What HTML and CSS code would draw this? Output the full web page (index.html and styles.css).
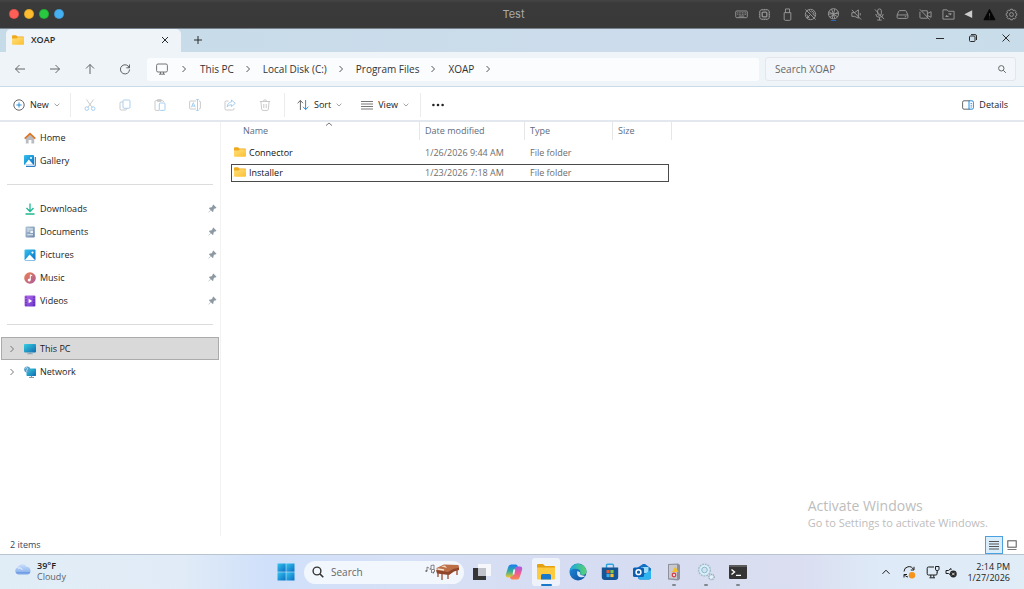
FILE: index.html
```html
<!DOCTYPE html>
<html lang="en">
<head>
<meta charset="utf-8">
<title>Test</title>
<link rel="stylesheet" href="styles.css">
</head>
<body>
<svg class="defs" aria-hidden="true">
  <defs>
    <linearGradient id="gFolder" x1="0" y1="0" x2="1" y2="1"><stop offset="0" stop-color="#ffdf7e"/><stop offset="1" stop-color="#fbc02f"/></linearGradient>
    <linearGradient id="gBlue" x1="0" y1="0" x2="1" y2="1"><stop offset="0" stop-color="#34c3ee"/><stop offset="1" stop-color="#0b6fc4"/></linearGradient>
    <linearGradient id="gTeal" x1="0" y1="0" x2="1" y2="1"><stop offset="0" stop-color="#35d0e0"/><stop offset="1" stop-color="#1169b0"/></linearGradient>
    <linearGradient id="gMusic" x1="0" y1="0" x2="1" y2="1"><stop offset="0" stop-color="#f0824e"/><stop offset="1" stop-color="#a8579c"/></linearGradient>
    <linearGradient id="gVideo" x1="0" y1="0" x2="1" y2="1"><stop offset="0" stop-color="#b56be8"/><stop offset="1" stop-color="#6a35cf"/></linearGradient>
    <linearGradient id="gDoc" x1="0" y1="0" x2="1" y2="1"><stop offset="0" stop-color="#b4c8dc"/><stop offset="1" stop-color="#6883a6"/></linearGradient>
    <linearGradient id="gCloud" x1="0" y1="0" x2="0" y2="1"><stop offset="0" stop-color="#c9defb"/><stop offset="1" stop-color="#7ea9ea"/></linearGradient>
    <linearGradient id="gEdge" x1="0" y1="0" x2="1" y2="0"><stop offset="0" stop-color="#1ba6e4"/><stop offset="1" stop-color="#58d36b"/></linearGradient>
    <linearGradient id="gEdge2" x1="0" y1="0" x2="1" y2="1"><stop offset="0" stop-color="#1c8fdc"/><stop offset="1" stop-color="#114a9b"/></linearGradient>
    <linearGradient id="gCopA" x1="0" y1="0" x2="0" y2="1"><stop offset="0" stop-color="#1a7cf0"/><stop offset=".5" stop-color="#2fae9c"/><stop offset="1" stop-color="#f3c62c"/></linearGradient>
    <linearGradient id="gCopB" x1="0" y1="0" x2="0" y2="1"><stop offset="0" stop-color="#a35be8"/><stop offset=".5" stop-color="#ee5a96"/><stop offset="1" stop-color="#f8894a"/></linearGradient>
    <symbol id="folder" viewBox="0 0 12 10"><path d="M0 1.2Q0 .2 1 .2H4L5.4 1.6H11Q12 1.6 12 2.6V5H0Z" fill="#efa91c"/><path d="M0 3.4H4.6L6 2.3H11.4Q12 2.3 12 3V9Q12 9.8 11.2 9.8H.8Q0 9.8 0 9Z" fill="url(#gFolder)"/></symbol>
    <symbol id="chev" viewBox="0 0 6 8"><path d="M1.5 1 4.5 4 1.5 7" fill="none" stroke="currentColor"/></symbol>
    <symbol id="down" viewBox="0 0 6 4"><path d="M.6.7 3 3 5.4.7" fill="none" stroke="currentColor" stroke-width=".8"/></symbol>
    <symbol id="pin" viewBox="0 0 9 9"><path d="M5.3.5 8.5 3.7 7.6 4.4 6.9 4.3 5.5 5.8 5.4 7.4 4.6 8 2.9 6.3.7 8.5.4 8.2 2.6 6 1 4.4 1.6 3.6 3.2 3.5 4.7 2.1 4.6 1.3Z" fill="#8c99a3"/></symbol>
    <symbol id="picture" viewBox="0 0 12 12"><rect x=".5" y=".5" width="11" height="11" rx="1" fill="url(#gBlue)"/><path d="M1 11 5.6 5.4 11 11Z" fill="#fff"/><circle cx="8.5" cy="3.6" r="1.1" fill="#fff"/></symbol>
  </defs>
</svg>

<div class="screen">
  <header class="vm-bar">
    <div class="lights"><i class="red"></i><i class="yellow"></i><i class="green"></i><i class="blue"></i></div>
    <h1 class="vm-title">Test</h1>
    <div class="vm-tools">
      <svg viewBox="0 0 14 14"><rect x=".8" y="3.2" width="12.4" height="7.2" rx="1"/><path d="M2.4 5.2H12M2.4 6.8H12" stroke-dasharray="1 .7"/><path d="M4 8.7H10"/></svg>
      <svg viewBox="0 0 14 14"><rect x="2" y="2" width="10" height="10" rx="2"/><rect x="4.5" y="4.5" width="5" height="5" rx="1" stroke-width="1.4"/><path d="M4.5 1V2M7 1V2M9.5 1V2M4.5 12V13M7 12V13M9.5 12V13M1 4.5H2M1 7H2M1 9.5H2M12 4.5H13M12 7H13M12 9.5H13"/></svg>
      <svg viewBox="0 0 14 14"><path d="M4.8 5V1H9.2V5M3.4 5H10.6V12Q10.6 13.3 9.3 13.3H4.7Q3.4 13.3 3.4 12Z"/></svg>
      <svg viewBox="0 0 14 14"><circle cx="7" cy="7" r="5.6"/><path d="M1.5 1.5 12.5 12.5M7 7 3 11M8 3Q11 4 11 7M3 7Q3.5 10 6 11M5 2 8 5M9 6 12 9"/></svg>
      <svg viewBox="0 0 14 14"><circle cx="7" cy="6.2" r="5.5"/><path d="M2 4 11.5 9.5M12 4 3 10M5 1.2 8.5 11.5M8.5 1 5.5 11.5M1.5 6.5 12.5 6"/><path d="M4.2 13.5H9.8" stroke="#2a6bc4"/></svg>
      <svg viewBox="0 0 14 14"><path d="M2 5H5L9 2V11L5 9H2ZM2 2 12 12.5M11 5.5V8"/></svg>
      <svg viewBox="0 0 14 14"><rect x="5" y="1" width="4" height="7" rx="2"/><path d="M3 6.5Q3 10 7 10T11 6.5M7 10V13M4.5 13H9.5M2 1.5 12 12"/></svg>
      <svg viewBox="0 0 14 14"><path d="M1.2 7.5 3 3.5Q3.3 2.8 4 2.8H10Q10.7 2.8 11 3.5L12.8 7.5V10Q12.8 11.2 11.6 11.2H2.4Q1.2 11.2 1.2 10ZM1.2 7.5H12.8M9.5 9.4H11"/></svg>
      <svg viewBox="0 0 14 14"><path d="M3 3H9V11H2Q1 11 1 10V4M9 6 13 4V10L9 8M1 1.5 11.5 12.5"/></svg>
      <svg viewBox="0 0 14 14"><path d="M1 12V2H5.5L6.8 3.5H13V12Z"/><path d="M4 9H7M7 6.4H10" stroke-width="1.3"/><path d="M4 9 5.3 7.8M10 6.4 8.7 7.6"/></svg>
      <svg class="t-play" viewBox="0 0 14 14"><path d="M2.5 6.6 11 2.5V10.8Z" fill="#ccc" stroke="none"/></svg>
      <svg class="t-warn" viewBox="0 0 14 14"><path d="M7 1.5 13 12.7H1Z" fill="#050505" stroke="#050505"/><path d="M7 5.5V9M7 10.3V11.3" stroke="#444"/></svg>
      <svg class="t-gear" viewBox="0 0 14 14"><path d="M5.9 1.3H8.1L8.7 2.8 10.3 2.2 11.8 3.7 11.2 5.3 12.7 5.9V8.1L11.2 8.7 11.8 10.3 10.3 11.8 8.7 11.2 8.1 12.7H5.9L5.3 11.2 3.7 11.8 2.2 10.3 2.8 8.7 1.3 8.1V5.9L2.8 5.3 2.2 3.7 3.7 2.2 5.3 2.8Z"/><circle cx="7" cy="7" r="2.1"/></svg>
    </div>
  </header>

  <div class="tab-strip">
    <div class="tab"><svg class="i-folder"><use href="#folder"/></svg><strong>XOAP</strong>
      <button class="plain" aria-label="Close tab"><svg class="i8" viewBox="0 0 8 8"><path d="M1 1 7 7M7 1 1 7"/></svg></button></div>
    <button class="plain new-tab" aria-label="New tab"><svg class="i8" viewBox="0 0 8 8"><path d="M4 0V8M0 4H8"/></svg></button>
    <div class="win-buttons">
      <button class="plain" aria-label="Minimize"><svg class="i8" viewBox="0 0 8 8"><path d="M0 4.5H8"/></svg></button>
      <button class="plain" aria-label="Restore"><svg class="i8" viewBox="0 0 8 8"><rect x=".5" y="2" width="5.5" height="5.5" rx="1"/><path d="M2 .6H6Q7.5.6 7.5 2V6"/></svg></button>
      <button class="plain" aria-label="Close"><svg class="i8" viewBox="0 0 8 8"><path d="M.5.5 7.5 7.5M7.5.5.5 7.5"/></svg></button>
    </div>
  </div>

  <nav class="nav-row">
    <div class="nav-buttons">
      <button class="plain" aria-label="Back"><svg class="i12" viewBox="0 0 12 12"><path d="M1.5 6H11M5.5 2 1.5 6 5.5 10"/></svg></button>
      <button class="plain" aria-label="Forward"><svg class="i12" viewBox="0 0 12 12"><path d="M1 6H10.5M6.5 2 10.5 6 6.5 10"/></svg></button>
      <button class="plain" aria-label="Up"><svg class="i12" viewBox="0 0 12 12"><path d="M6 1.5V11M2 5.5 6 1.5 10 5.5"/></svg></button>
      <button class="plain" aria-label="Refresh"><svg class="i12" viewBox="0 0 12 12"><path d="M10.4 5A4.6 4.6 0 1 0 10.6 6.5M10.5 1.5V4.8H7.3"/></svg></button>
    </div>
    <div class="address">
      <svg class="i12" viewBox="0 0 12 12"><rect x=".6" y="1" width="10.8" height="8" rx="1.4"/><path d="M4.5 9V11M7.5 9V11M3 11.2H9"/></svg>
      <svg class="crumb-chev"><use href="#chev"/></svg><a href="#">This PC</a>
      <svg class="crumb-chev"><use href="#chev"/></svg><a href="#">Local Disk (C:)</a>
      <svg class="crumb-chev"><use href="#chev"/></svg><a href="#">Program Files</a>
      <svg class="crumb-chev"><use href="#chev"/></svg><a href="#">XOAP</a>
      <svg class="crumb-chev"><use href="#chev"/></svg>
    </div>
    <label class="search"><input type="search" placeholder="Search XOAP" aria-label="Search XOAP"><svg class="i8" viewBox="0 0 8 8"><circle cx="3.3" cy="3.3" r="2.7"/><path d="M5.3 5.3 7.8 7.8"/></svg></label>
  </nav>

  <div class="commands">
    <button class="plain cmd new"><svg class="i12" viewBox="0 0 12 12"><circle cx="6" cy="6" r="5.2"/><path d="M6 3.4V8.6M3.4 6H8.6" stroke="#1583d6"/></svg>New<svg class="i-down"><use href="#down"/></svg></button>
    <div class="file-ops">
      <button class="plain" disabled aria-label="Cut"><svg class="i12" viewBox="0 0 12 12"><path d="M2.5.5 8 8.3M9.5.5 4 8.3"/><g class="accent"><circle cx="2.8" cy="9.6" r="1.8"/><circle cx="9.2" cy="9.6" r="1.8"/></g></svg></button>
      <button class="plain" disabled aria-label="Copy"><svg class="i12" viewBox="0 0 12 12"><path d="M4 3H2Q1 3 1 4V10Q1 11 2 11H6.5Q7.5 11 7.5 9.5"/><rect class="accent" x="4" y="1" width="7" height="8.3" rx="1.2"/></svg></button>
      <button class="plain" disabled aria-label="Paste"><svg class="i12" viewBox="0 0 12 12"><path d="M5 11.4H2Q1 11.4 1 10.4V2.6Q1 1.6 2 1.6H8.5Q9.5 1.6 9.5 3M3.5.6H7V2.4H3.5Z"/><rect class="accent" x="5.3" y="4" width="5.7" height="7.4" rx="1"/></svg></button>
      <button class="plain" disabled aria-label="Rename"><svg class="i12" viewBox="0 0 12 12"><path d="M7 2H1.6Q.6 2 .6 3V9Q.6 10 1.6 10H7M10 2Q11.4 2 11.4 3V9Q11.4 10 10 10"/><path class="accent" d="M8.5.6V11.4M7.2.6H9.8M7.2 11.4H9.8M2.4 8.3 4.3 3.7 6.2 8.3M3 7H5.6"/></svg></button>
      <button class="plain" disabled aria-label="Share"><svg class="i12" viewBox="0 0 12 12"><path d="M4.5 2H2.2Q1 2 1 3.2V9.8Q1 11 2.2 11H8.8Q10 11 10 9.8V9"/><path class="accent" d="M7.5 1 11.3 4.3 7.5 7.6V5.7Q4.5 5.6 3.2 8 3.4 3.4 7.5 2.9Z"/></svg></button>
      <button class="plain" disabled aria-label="Delete"><svg class="i12" viewBox="0 0 12 12"><path d="M.8 2.5H11.2M4.4 2.5Q4.4.8 6 .8T7.6 2.5M1.9 2.5 2.7 10.4Q2.8 11.4 3.8 11.4H8.2Q9.2 11.4 9.3 10.4L10.1 2.5M4.8 5V9M7.2 5V9"/></svg></button>
    </div>
    <div class="arrange">
      <button class="plain cmd"><svg class="i12" viewBox="0 0 12 12"><path d="M3.4 11V1.5M.6 4.2 3.4 1.5 6 4.2"/><path d="M8.6 1V10.5M6 7.8 8.6 10.5 11.4 7.8" stroke="#1583d6"/></svg>Sort<svg class="i-down"><use href="#down"/></svg></button>
      <button class="plain cmd"><svg class="i12" viewBox="0 0 12 12"><path d="M0 2.5H12M0 5H12M0 7.5H12M0 10H12" stroke-width=".8"/></svg>View<svg class="i-down"><use href="#down"/></svg></button>
    </div>
    <button class="plain more" aria-label="More"><svg class="i12" viewBox="0 0 12 12"><g fill="#222" stroke="none"><circle cx="1.4" cy="6" r="1.3"/><circle cx="6" cy="6" r="1.3"/><circle cx="10.6" cy="6" r="1.3"/></g></svg></button>
    <button class="plain cmd details"><svg class="i12" viewBox="0 0 12 12"><path d="M7.5 1.8H2Q.6 1.8.6 3.2V8.8Q.6 10.2 2 10.2H7.5"/><path d="M7 1.8H10Q11.4 1.8 11.4 3.2V8.8Q11.4 10.2 10 10.2H7ZM8.6 4.5H9.8M8.6 6.3H9.8M8.6 8H9.8" stroke="#1583d6"/></svg>Details</button>
  </div>

  <main class="body">
    <aside class="side">
      <a class="item" href="#"><span></span><svg class="i12" viewBox="0 0 12 12"><path d="M1.8 5.5 6 2 10.2 5.5V11.4H7.4V8H4.6V11.4H1.8Z" fill="#b9bdc1" stroke="none"/><path d="M.7 6.6 6 1.6 11.3 6.6" stroke="#dd7624" stroke-width="1.7"/></svg>Home</a>
      <a class="item" href="#"><span></span><svg class="i12" viewBox="0 0 12 12"><path d="M11.3 2V10.3Q11.3 11.3 10.3 11.3H2" stroke="#2c7fc4" stroke-width="1.2"/><rect x="0" y="0" width="10" height="10" rx="1" fill="url(#gBlue)" stroke="none"/><path d="M.6 9.7 4.8 4.5 9.4 9.7Z" fill="#fff" stroke="none"/><circle cx="7" cy="3" r="1" fill="#fff" stroke="none"/></svg>Gallery</a>
      <hr>
      <a class="item" href="#"><span></span><svg class="i12" viewBox="0 0 12 12"><path d="M6 .5V8.3M2.5 5 6 8.5 9.5 5M1.5 11H10.5" stroke="#1fb893" stroke-width="1.3"/></svg>Downloads<svg class="i-pin"><use href="#pin"/></svg></a>
      <a class="item" href="#"><span></span><svg class="i12" viewBox="0 0 12 12"><rect x="1.5" y=".5" width="9.3" height="11" rx="1" fill="url(#gDoc)" stroke="none"/><path d="M3.3 3H9M3.3 5H5.5M3.3 8.8H9" stroke="#edf3f8"/><rect x="6.3" y="4.6" width="2.7" height="2.5" fill="#edf3f8" stroke="none"/></svg>Documents<svg class="i-pin"><use href="#pin"/></svg></a>
      <a class="item" href="#"><span></span><svg class="i12"><use href="#picture" stroke="none"/></svg>Pictures<svg class="i-pin"><use href="#pin"/></svg></a>
      <a class="item" href="#"><span></span><svg class="i12" viewBox="0 0 12 12"><circle cx="6" cy="6" r="5.8" fill="url(#gMusic)" stroke="none"/><path d="M6.3 7.8V2.8L8.2 3.8" stroke="#fff"/><circle cx="5.2" cy="7.9" r="1.5" fill="#fff" stroke="none"/></svg>Music<svg class="i-pin"><use href="#pin"/></svg></a>
      <a class="item" href="#"><span></span><svg class="i12" viewBox="0 0 12 12"><rect x=".6" y=".6" width="10.8" height="10.8" rx="1" fill="url(#gVideo)" stroke="none"/><path d="M2 1.6V11M10 1.6V11" stroke="#4b1c96" stroke-dasharray="1.4 1.2"/><path d="M4.6 3.8 8.2 6 4.6 8.2Z" fill="#fff" stroke="none"/></svg>Videos<svg class="i-pin"><use href="#pin"/></svg></a>
      <hr>
      <a class="item selected" href="#"><svg class="i-exp"><use href="#chev"/></svg><svg class="i12" viewBox="0 0 12 12"><rect x="0" y="1" width="12" height="8.4" rx=".8" fill="url(#gTeal)" stroke="none"/><path d="M4.5 9.5H7.5V10.5H9V11.3H3V10.5H4.5Z" fill="#8aa4b4" stroke="none"/></svg>This PC</a>
      <a class="item" href="#"><svg class="i-exp"><use href="#chev"/></svg><svg class="i12" viewBox="0 0 12 12"><rect x="2.5" y="2.5" width="9.5" height="7.4" rx=".6" fill="url(#gTeal)" stroke="none"/><path d="M5 11.4H10M7.5 9.8V11.2" stroke="#7893a5"/><circle cx="3.2" cy="3.6" r="3" fill="#4e9cc9" stroke="none"/><path d="M1 2.4 3 1.5 4 3 2.5 4 3 6" stroke="#c5e3f1" stroke-width=".8"/></svg>Network</a>
    </aside>
    <section class="files">
      <table>
        <thead><tr><th class="c-name"><svg class="i-sort" viewBox="0 0 8 4"><path d="M1 3.6 4 1 7 3.6"/></svg>Name</th><th class="c-date">Date modified</th><th class="c-type">Type</th><th class="c-size">Size</th><th class="c-end"></th></tr></thead>
        <tbody>
          <tr><td><svg class="i-folder"><use href="#folder"/></svg>Connector</td><td>1/26/2026 9:44 AM</td><td>File folder</td><td></td></tr>
          <tr class="focus"><td><svg class="i-folder"><use href="#folder"/></svg>Installer</td><td>1/23/2026 7:18 AM</td><td>File folder</td><td></td></tr>
        </tbody>
      </table>
    </section>
    <div class="watermark"><p>Activate Windows</p><small>Go to Settings to activate Windows.</small></div>
  </main>

  <div class="status"><span>2 items</span>
    <button class="plain mode on" aria-label="Details view"><svg viewBox="0 0 10 10"><path d="M0 1.5H10M0 4H10M0 6.5H10M0 9H10"/></svg></button>
    <button class="plain mode" aria-label="Large icons view"><svg viewBox="0 0 10 10"><rect x=".8" y=".8" width="8.4" height="6.4"/><path d="M.5 9.5H9.5" stroke-width=".8"/></svg></button>
  </div>

  <footer class="taskbar">
    <div class="weather"><svg viewBox="0 0 18 12"><path d="M4 11.5A3.6 3.6 0 0 1 3.6 4.6 5 5 0 0 1 12.6 3.8 4 4 0 0 1 14 11.5Z" fill="url(#gCloud)"/><path d="M2 9.8H16" stroke="#6795df"/><path d="M4 5Q7 4 8.5 7" stroke="#eef5ff" fill="none"/></svg>
      <div><b>39°F</b><span>Cloudy</span></div></div>
    <div class="dock">
      <button class="plain app" aria-label="Start"><svg viewBox="0 0 18 18"><g fill="url(#gBlue)"><rect x=".5" y=".5" width="8.2" height="8.2"/><rect x="9.3" y=".5" width="8.2" height="8.2"/><rect x=".5" y="9.3" width="8.2" height="8.2"/><rect x="9.3" y="9.3" width="8.2" height="8.2"/></g></svg></button>
      <label class="task-search"><svg class="i12" viewBox="0 0 12 12"><circle cx="5" cy="5" r="3.9" stroke-width="1.4"/><path d="M7.9 7.9 11.3 11.3" stroke-width="1.5"/></svg><input type="search" placeholder="Search" aria-label="Search">
        <svg class="piano" viewBox="0 0 36 18"><g stroke="#6b6b6b" stroke-width=".8"><path d="M3 8V4L5 5M7 6V2.5L10 2V6M7.5 10V6.5H10.5V9"/></g><g fill="#6b6b6b"><circle cx="2.3" cy="8" r="1"/><circle cx="6.3" cy="6" r=".8"/><circle cx="9.3" cy="9.5" r=".9"/></g><path d="M12.5 5 20 1.5 34.5 2 35 5 29 6.5 24 9.5 13 8.5Z" fill="#bd6f48"/><path d="M12 7 24 9 29 6 35 4.5V7L30 8.5 25 12 13 10.5Z" fill="#8f452a"/><path d="M13.5 6 20 7" stroke="#f4e5cf" stroke-width="1.6"/><path d="M17 3.3 21 2.5 23 5Z" fill="#f0dcc0"/><path d="M14 10V14M18 11V17M24 11V16M33 6V12" stroke="#9a4c2d" stroke-width="1.3"/></svg></label>
      <button class="plain app" aria-label="Task view"><svg viewBox="0 0 18 18"><path d="M0 5H6V13H13V17H0Z" fill="#353535"/><rect x="5" y="1" width="13" height="12" fill="#f6f7fa"/><rect x="5" y="5" width="8" height="8" fill="#bfc2c8"/></svg></button>
      <button class="plain app" aria-label="Copilot"><svg viewBox="0 0 18 18"><path d="M6 1.5H11Q12.5 1.5 13 4L10 5 8 13Q7.5 14.5 5 14.5H3Q0 14.5 1 11L3.2 4Q4 1.5 6 1.5Z" fill="url(#gCopA)"/><path d="M12 16.5H7Q5.5 16.5 5 14L8 13 10 5Q10.5 3.5 13 3.5H15Q18 3.5 17 7L14.8 14Q14 16.5 12 16.5Z" fill="url(#gCopB)"/><path d="M8.4 6.5H10.2L9.4 11.5H7.6Z" fill="#eef0fa"/></svg></button>
      <button class="plain app current" aria-label="File Explorer"><svg viewBox="0 0 18 18"><path d="M0 2Q0 1 1 1H6L8 3H17Q18 3 18 4V7H0Z" fill="#e3a112"/><path d="M0 4.5H18V15.5Q18 16.5 17 16.5H1Q0 16.5 0 15.5Z" fill="#fdca40"/><path d="M4 16.5V12.5Q4 11 5.5 11H12.5Q14 11 14 12.5V16.5Z" fill="#1878cc"/></svg></button>
      <button class="plain app" aria-label="Edge"><svg viewBox="0 0 18 18"><circle cx="9" cy="9" r="8.5" fill="url(#gEdge2)"/><path d="M.6 8A8.5 8.5 0 0 1 17.5 8.5Q17.3 12 13.5 12 10.5 12 11.3 9.8 11.8 6.8 8 6 3.5 5.3.6 8Z" fill="url(#gEdge)"/><path d="M8.5 8Q7 12 10.5 14 14 15 16.3 13 14 12.5 12 12 10.2 11.3 11 9.3Z" fill="#d7e5f6"/></svg></button>
      <button class="plain app" aria-label="Store"><svg viewBox="0 0 18 18"><path d="M5.5 5V2.5Q5.5 1.3 6.7 1.3H11.3Q12.5 1.3 12.5 2.5V5" fill="none" stroke="#2ba6e2" stroke-width="1.4"/><path d="M.8 4.5H17.2V14Q17.2 17 14.2 17H3.8Q.8 17 .8 14Z" fill="#155596"/><rect x="5.5" y="7" width="3.2" height="3.2" fill="#f1542e"/><rect x="9.4" y="7" width="3.2" height="3.2" fill="#84c63f"/><rect x="5.5" y="10.9" width="3.2" height="3.2" fill="#31aef0"/><rect x="9.4" y="10.9" width="3.2" height="3.2" fill="#fcc02e"/></svg></button>
      <button class="plain app" aria-label="Outlook"><svg viewBox="0 0 18 18"><path d="M4 5 10 1H12L18 5.5V14Q18 16.5 15.5 16.5H7Q5 16.5 5 14Z" fill="#1271c4"/><path d="M8 4H15.5V10H8Z" fill="#9edcf8"/><path d="M5 15 18 7V14Q18 16.5 15.5 16.5H7Z" fill="#2eb4ef"/><rect x="0" y="4.5" width="11" height="9.5" rx="1.5" fill="#0c5fb3"/><circle cx="5.5" cy="9.2" r="2.4" fill="none" stroke="#fff" stroke-width="1.5"/></svg></button>
      <button class="plain app open" aria-label="Server configuration"><svg viewBox="0 0 18 18"><path d="M3 1 13 .5 15 2V16L13 17.5 3 16.5Z" fill="#8f929d"/><path d="M4 2 12 1.7V16L4 15.3Z" fill="#c8c9d1"/><path d="M10.3 3.5 13.6 9H7Z" fill="#f4bd27"/><circle cx="9" cy="12" r="2.4" fill="#d94148"/><path d="M8 11 10 13M10 11 8 13" stroke="#fff" stroke-width=".8"/></svg></button>
      <button class="plain app open" aria-label="Services"><svg viewBox="0 0 18 18"><circle cx="7.5" cy="7" r="5.6" fill="#e2f1f5" stroke="#9fbccb" stroke-width="2" stroke-dasharray="1.8 .8"/><circle cx="7.5" cy="7" r="4.6" fill="none" stroke="#d5ebf3" stroke-width="1.2"/><circle cx="7.5" cy="7" r="2.8" fill="#d9dff0" stroke="#7dbbd2"/><circle cx="14.5" cy="14" r="2.6" fill="#e6f2f7" stroke="#95afc0" stroke-width="1.5" stroke-dasharray="1.3 .6"/></svg></button>
      <button class="plain app open" aria-label="Terminal"><svg viewBox="0 0 18 18"><rect x="0" y="2" width="18" height="14" rx="1" fill="#343434"/><rect x="0" y="2" width="18" height="2" fill="#5b5b5b"/><path d="M2.5 6.5 5.5 9 2.5 11.5M7 12.4H12" stroke="#fff" stroke-width="1.4" fill="none"/></svg></button>
    </div>
    <div class="tray">
      <svg class="i12" viewBox="0 0 12 12"><path d="M2.5 7.8 6 4.2 9.5 7.8"/></svg>
      <svg class="i14" viewBox="0 0 14 14"><path d="M2 6.5A5 5 0 0 1 11.5 4.5M12 1.8V5H8.8M2 12.5V9.5H5M2.3 9.8Q3.5 11.8 6 12"/><circle cx="10" cy="10.2" r="3.2" fill="#f7941d" stroke="none"/></svg>
      <svg class="i14" viewBox="0 0 14 14"><path d="M8 2H2.4Q1.2 2 1.2 3.2V8.8Q1.2 10 2.4 10H10Q11 10 11 9V7.5M4.8 10V12.5M7.8 10V12.5M3.5 12.8H9M9.5 1.5H13V4.3Q13 5.6 11.2 5.6T9.5 4.3ZM11.2 5.6V8"/></svg>
      <svg class="i12 sound" viewBox="0 0 12 12"><path d="M5 8.5 3.5 7.5H1V4.5H3.5L6 2.5V4"/><circle cx="8.3" cy="8" r="3.4" fill="#262626" stroke="none"/><path d="M7 6.7 9.6 9.3M9.6 6.7 7 9.3" stroke="#fff" stroke-width=".8"/></svg>
      <time><span>2:14 PM</span><span>1/27/2026</span></time>
    </div>
  </footer>
</div>
</body>
</html>
```
FILE: styles.css
```css
* { box-sizing: border-box; }
body { margin: 0; font: 9px/12px "Open Sans", "Noto Sans", sans-serif; color: #1c1c1c; background: #fff; }
a { color: inherit; text-decoration: none; }
svg { flex: none; fill: none; stroke: none; }
.defs { position: absolute; width: 0; height: 0; }
.screen { min-height: 100vh; display: flex; flex-direction: column; }

.plain { border: 0; background: none; padding: 0; margin: 0; font: inherit; color: inherit; display: flex; align-items: center; justify-content: center; }
.i8, .i12, .i14, .vm-tools svg, .mode svg { stroke: currentColor; }
.i8 { width: 8px; height: 8px; }
.i12 { width: 12px; height: 12px; }
.i14 { width: 14px; height: 14px; }
.i-folder { width: 12px; height: 10px; }
.i-down { width: 6px; height: 4px; color: #8a8a8a; }

.vm-bar { display: grid; grid-template-columns: 1fr auto 1fr; align-items: center; height: 28px; padding: 0 6px 0 9px; background: linear-gradient(#454545, #3a3a3a 3px, #393939); }
.lights { display: flex; gap: 5px; }
.lights i { width: 10px; height: 10px; border-radius: 50%; border: 1px solid #0002; }
.red { background: #ff5f57; }
.yellow { background: #febc2e; }
.green { background: #28c840; }
.blue { background: #46b1f0; }
.vm-title { margin: 0; font: 11px/14px Inter, sans-serif; color: #aaa; }
.vm-tools { display: flex; justify-content: flex-end; gap: 10px; color: #999; }
.vm-tools svg { width: 13px; height: 13px; }
.vm-tools .t-play { margin-left: -3px; }
.vm-tools .t-warn { margin-left: -2px; }
.vm-tools .t-gear { margin-left: -1px; }

.tab-strip { display: flex; height: 24px; padding-left: 6px; border-top: 1px solid #76818c; background: linear-gradient(90deg, #c6dbe8, #cddcec 70%, #c8dde9); color: #2b2b2b; }
.tab { display: flex; align-items: center; gap: 7px; width: 175px; padding: 0 12px 2px 6px; background: #eff4f9; border-radius: 5px 5px 0 0; }
.tab strong { font-size: 9px; font-weight: 600; }
.tab .plain { margin-left: auto; }
.new-tab { width: 33px; padding-bottom: 2px; }
.win-buttons { display: flex; margin-left: auto; padding: 0 2px 5px 0; }
.win-buttons .plain { width: 33px; }

.nav-row { display: flex; align-items: center; height: 35px; padding: 0 8px 0 2px; background: #eff4f9; border-bottom: 1px solid #c9dae8; font-size: 10px; line-height: 14px; color: #333; }
.nav-buttons { display: flex; margin-right: 5px; }
.nav-buttons .plain { width: 35px; color: #555; }
.nav-row .i12 { stroke-width: .9; }
.address { display: flex; align-items: center; flex: 1; height: 23px; padding-left: 9px; border-radius: 3px; background: #fbfcfe; }
.crumb-chev { width: 6px; height: 8px; margin: 0 12px 0 11px; color: #555; }
.address .i12 { color: #666; }
.address .i12 + .crumb-chev { margin: 0 13px; }
.search { display: flex; align-items: center; width: 251px; height: 24px; margin-left: 6px; padding: 0 9px; border: 1px solid #e3e7eb; border-radius: 3px; background: #f3f6fa; color: #666; }
input { flex: 1; min-width: 0; border: 0; outline: 0; padding: 0; background: none; font: inherit; color: inherit; }
input::placeholder { color: #666; opacity: 1; }

.commands { display: flex; align-items: center; height: 35px; padding: 2px 16px 0 13px; border-bottom: 2px solid #e2e8ed; color: #222; }
.commands .i12 { stroke-width: .9; color: #555; }
.cmd { gap: 5px; }
.new { width: 58px; height: 24px; justify-content: flex-start; border-right: 1px solid #ececec; }
.file-ops { display: flex; height: 24px; padding: 0 2px 0 1px; border-right: 1px solid #ececec; }
.file-ops .plain { width: 35px; }
.commands .file-ops .i12 { color: #c4c4c4; }
.accent { stroke: #9cc9ee; }
.arrange { display: flex; gap: 19px; height: 24px; padding: 0 11px 0 12px; border-right: 1px solid #ececec; }
.more { width: 35px; }
.details { margin-left: auto; }

.body { position: relative; display: flex; flex: 1; }
.side { width: 221px; padding-top: 4px; border-right: 1px solid #f2f2f2; }
.item { display: grid; grid-template-columns: 12px 12px 1fr 9px; column-gap: 4px; align-items: center; height: 23px; padding: 0 2px 0 7px; margin: 0 1px; }
.item span, .i-exp { width: 6px; height: 8px; color: #777; }
.i-exp { margin-left: 1px; }
.i-pin { width: 9px; height: 9px; }
.selected { background: #d9d9d9; outline: 1px solid #ababab; outline-offset: -1px; }
.side hr { border: 0; height: 1px; margin: 12px 7px; background: #dcdcdc; }

.files { flex: 1; }
table { table-layout: fixed; width: 441px; margin: -2px 0 0 10px; border-collapse: separate; border-spacing: 0 2px; }
th { height: 20px; padding: 0 0 3px 5px; text-align: left; font-weight: 400; color: #5d6b80; background: linear-gradient(#e6e6e6, #e6e6e6) right top / 1px 18px no-repeat; }
.c-name { position: relative; width: 189px; padding-left: 12px; }
.c-date { width: 105px; }
.c-type { width: 88px; }
.c-size { width: 56px; background: none; }
.c-end { width: 3px; padding: 0; }
.i-sort { position: absolute; left: 94px; top: 0; width: 8px; height: 4px; stroke: #777; }
td { height: 18px; padding: 0 0 0 5px; border: 1px solid transparent; border-width: 1px 0; color: #6d6d6d; }
td:first-child { padding-left: 2px; border-left-width: 1px; color: #111; }
td:last-child { border-right-width: 1px; }
td .i-folder { margin-right: 3px; vertical-align: -1px; }
.focus td { border-color: #4a4a4a; }
.watermark { position: absolute; right: 36px; bottom: 6px; color: #bdbdbd; }
.watermark p { margin: 0; font-size: 14px; line-height: 18px; }
.watermark small { display: block; font-size: 11px; line-height: 15px; }

.status { display: flex; align-items: center; height: 18px; padding: 0 4px 0 10px; color: #35455e; }
.status span { margin-right: auto; }
.mode { width: 17px; height: 18px; color: #555; }
.mode svg { width: 10px; height: 10px; }
.mode.on { width: 18px; background: #d9edfb; border: 1px solid #4aa0e0; }

.taskbar { display: grid; grid-template-columns: 1fr auto 1fr; align-items: center; height: 35px; border-top: 1px solid #b9c4d0; background: linear-gradient(90deg, #e1edf6, #e0ebf7 18%, #d0e0fa 26%, #d7e0f6 40%, #d6dcf1 60%, #dadef0 78%, #deeaf7 86%, #e0edf7); }
.weather { display: flex; align-items: center; gap: 5px; padding: 0 0 2px 14px; }
.weather svg { width: 18px; height: 12px; margin-bottom: 4px; }
.weather b { display: block; font-weight: 600; line-height: 11px; }
.weather span { display: block; line-height: 11px; color: #5c636c; }
.dock { display: flex; align-items: center; }
.app { width: 32px; height: 28px; }
.app svg { width: 18px; height: 18px; }
.current, .open { flex-direction: column; justify-content: flex-end; }
.current { width: 28px; margin: 0 2px; border-radius: 3px; background: #edf2fb; }
.current::after, .open::after { content: ""; width: 4px; height: 2px; margin-top: 3px; border-radius: 1px; background: #81868f; }
.current::after { width: 11px; background: #1878cc; }
.task-search { display: flex; align-items: center; gap: 7px; width: 160px; height: 23px; margin: 0 2px; padding: 0 4px 0 8px; border-radius: 12px; background: #f2f6fd; color: #333; font-size: 10px; line-height: 14px; }
.piano { width: 36px; height: 18px; }
.tray { display: flex; align-items: center; justify-content: flex-end; gap: 10px; padding: 0 14px 1px 0; }
.tray .sound { margin-left: -5px; }
time { text-align: right; }
time span { display: block; line-height: 11px; }
```
